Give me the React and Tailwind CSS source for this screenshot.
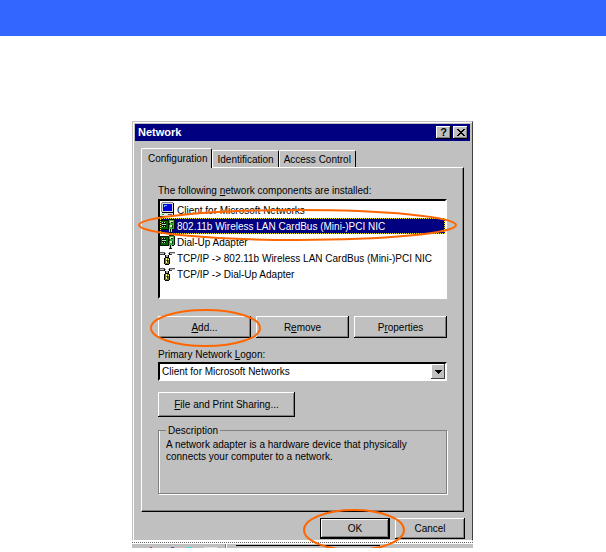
import React, { useState } from "react";

const raised =
  "bg-[#c0c0c0] shadow-[inset_-1px_-1px_#000,inset_1px_1px_#fff,inset_-2px_-2px_#808080]";

const components = [
  { id: 1, icon: "client", name: "Client for Microsoft Networks" },
  { id: 2, icon: "card", name: "802.11b Wireless LAN CardBus (Mini-)PCI NIC" },
  { id: 3, icon: "card", name: "Dial-Up Adapter" },
  { id: 4, icon: "protocol", name: "TCP/IP -> 802.11b Wireless LAN CardBus (Mini-)PCI NIC" },
  { id: 5, icon: "protocol", name: "TCP/IP -> Dial-Up Adapter" },
];

function ClientIcon() {
  return (
    <svg width="16" height="16" viewBox="0 0 16 16" shapeRendering="crispEdges">
      <path d="M2 1h11v9H2z" fill="#d8d8d8" />
      <path d="M2 0h11v1H2zM1 1h1v9H1z" fill="#808080" />
      <path d="M13 1h1v9h-1zM2 10h12v1H2z" fill="#000" />
      <path d="M3 2h9v7H3z" fill="#0000e0" />
      <path d="M4 3h3v1H5v1H4z" fill="#60c0ff" />
      <path d="M1 11h12v3H0v-2h1z" fill="#e0e0e0" />
      <path d="M13 11h1v3h-1zM0 14h13v1H0z" fill="#000" />
      <path d="M8 12h4v1H8z" fill="#606060" />
      <path d="M2 12h2v1H2z" fill="#00c000" />
    </svg>
  );
}

function CardIcon() {
  return (
    <svg width="16" height="16" viewBox="0 0 16 16" shapeRendering="crispEdges">
      <path d="M0 2h9v10H0z" fill="#001800" />
      <path d="M1 3h7v8H1z" fill="#006400" />
      <path d="M2 4h4v2H2zM2 7h4v2H2z" fill="#000" />
      <path d="M2 4h1v1H2zM4 4h1v1H4zM2 8h1v1H2zM4 8h1v1H4zM2 6h4v1H2z" fill="#c0d8c0" />
      <path d="M9 1h5v1h1v9h-1v1h-2v3H9z" fill="#001800" />
      <path d="M9 2h5v9H9z" fill="#40a840" />
      <path d="M10 3h3v2h-3zM10 7h2v2h-2z" fill="#d0f0b0" />
      <path d="M11 4h2v1h-2zM12 7h1v3h-1zM9 5h1v2H9z" fill="#004000" />
      <path d="M9 11h1v3H9zM11 11h1v3h-1z" fill="#e0e000" />
    </svg>
  );
}

function ProtocolIcon() {
  return (
    <svg width="16" height="16" viewBox="0 0 16 16" shapeRendering="crispEdges">
      <path d="M0 2h5v1H0zM9 2h6v1H9z" fill="#606060" />
      <path d="M0 3h4v1H0zM10 3h5v1h-5z" fill="#c0c0c0" />
      <path d="M0 4h4v1H0zM10 4h2v1h-2z" fill="#404040" />
      <path d="M4 3h1v2h1v2H5V5H4zM9 3h1v2H9v2H8V5h1z" fill="#000" />
      <path d="M5 3h1v1H5zM8 3h1v1H8zM6 5h2v2H6z" fill="#a0a0a0" />
      <path d="M5 7h4v1h1v6H9v1H5v-1H4V8h1z" fill="#000" />
      <path d="M5 8h4v6H5z" fill="#707030" />
      <path d="M6 8h1v2H6zM6 11h1v2H6zM8 9h1v1H8z" fill="#ffff80" />
      <path d="M7 10h1v2H7z" fill="#202000" />
    </svg>
  );
}

const icons = { client: ClientIcon, card: CardIcon, protocol: ProtocolIcon };

function Button({ className = "", children, ...props }) {
  return (
    <button type="button" className={`${raised} text-center leading-[13px] ${className}`} {...props}>
      {children}
    </button>
  );
}

// marks the thing the reader has to click
function Ring({ className }) {
  return (
    <span aria-hidden="true" className={`pointer-events-none absolute z-20 ${className}`}>
      <svg className="block h-full w-full overflow-visible">
        <ellipse cx="50%" cy="50%" rx="50%" ry="50%" fill="none" stroke="#ff6600" strokeWidth="2" />
      </svg>
    </span>
  );
}

export default function App() {
  const [tab, setTab] = useState("Configuration");
  const [selected, setSelected] = useState(2);
  const [logon, setLogon] = useState("Client for Microsoft Networks");

  return (
    <div className="bg-white font-['Liberation_Sans',Arial,sans-serif] text-[10px] leading-[13px] text-black">
      <header className="h-9 bg-[#3366ff]" />

      <main className="mx-auto mt-[85px] w-full max-w-[342px] pr-px">
        <section
          aria-label="Network"
          className="border border-l-[#c0c0c0] border-t-[#c0c0c0] border-r-[#404040] border-b-white bg-[#c0c0c0] pb-px shadow-[inset_1px_1px_#fff]"
        >
          <div className="mx-0.5 pt-0.5">
            <div className="flex h-[17px] items-center bg-[#000080] pl-[3px] pr-0.5">
              <h1 className="flex-1 text-[11px] font-bold text-white">Network</h1>
              <button
                type="button"
                aria-label="Help"
                className={`${raised} h-[13px] w-[15px] text-[11px] font-bold leading-[13px]`}
              >
                ?
              </button>
              <button type="button" aria-label="Close" className={`${raised} ml-0.5 flex h-[13px] w-[15px] items-center justify-center`}>
                <svg width="8" height="7" viewBox="0 0 8 7" shapeRendering="crispEdges">
                  <path d="M0 0h2v1h1v1h2V1h1V0h2v1H7v1H6v1H5v1h1v1h1v1h1v1H6V6H5V5H3v1H2v1H0V6h1V5h1V4h1V3H2V2H1V1H0z" />
                </svg>
              </button>
            </div>
          </div>

          <div className="mt-[7px] px-2">
            <div role="tablist" className="flex items-end">
              {["Configuration", "Identification", "Access Control"].map((name) => (
                <button
                  key={name}
                  type="button"
                  role="tab"
                  aria-selected={tab === name}
                  onClick={() => setTab(name)}
                  className={`rounded-t-[2px] border-l border-t border-r border-l-white border-t-white border-r-black bg-[#c0c0c0] ${
                    tab === name ? "relative z-10 -mb-px h-5 pl-1.5 pr-1" : "h-[17px] px-1"
                  }`}
                >
                  {name}
                </button>
              ))}
            </div>

            <div className="border border-l-white border-t-white border-r-black border-b-black px-4 pb-[17px] pt-4 shadow-[inset_-1px_-1px_#808080]">
              <p id="list-label">
                The following <u>n</u>etwork components are installed:
              </p>
              <div className="relative mt-0.5">
                <ul
                  role="listbox"
                  aria-labelledby="list-label"
                  className="h-[100px] border-2 border-l-black border-t-black border-r-white border-b-white bg-white pt-px"
                >
                  {components.map((c) => {
                    const Icon = icons[c.icon];
                    const active = selected === c.id;
                    return (
                      <li
                        key={c.id}
                        role="option"
                        aria-selected={active}
                        onClick={() => setSelected(c.id)}
                        className={`flex h-4 items-center whitespace-nowrap ${
                          active ? "bg-[#000080] text-white outline-1 -outline-offset-1 outline-dotted outline-[#ffff00]" : ""
                        }`}
                      >
                        <span className="mr-px w-4 shrink-0">
                          <Icon />
                        </span>
                        {c.name}
                      </li>
                    );
                  })}
                </ul>
                <Ring className="-left-[19px] -right-[9px] top-[11px] h-[30px]" />
              </div>

              <div className="mt-[17px] grid grid-cols-3 gap-[5px]">
                <div className="relative">
                  <Button className="h-[22px] w-full">
                    <u>A</u>dd...
                  </Button>
                  <Ring className="-left-[7px] -right-[9px] -top-1.5 h-9" />
                </div>
                <Button className="h-[22px]">
                  R<u>e</u>move
                </Button>
                <Button className="h-[22px]">
                  P<u>r</u>operties
                </Button>
              </div>

              <label htmlFor="logon" className="mt-[10px] block">
                Primary Network <u>L</u>ogon:
              </label>
              <div className="relative mt-px">
                <select
                  id="logon"
                  value={logon}
                  onChange={(e) => setLogon(e.target.value)}
                  className="block h-[19px] w-full appearance-none border-2 border-l-black border-t-black border-r-white border-b-white bg-white pl-0.5 leading-[13px] outline-none"
                >
                  <option>Client for Microsoft Networks</option>
                  <option>Windows Logon</option>
                </select>
                <span className="pointer-events-none absolute bottom-0.5 right-0.5 top-0.5 flex w-[14px] items-center justify-center bg-[#c0c0c0] shadow-[inset_-1px_-1px_#404040,inset_1px_1px_#fff]">
                  <svg width="7" height="4" viewBox="0 0 7 4" shapeRendering="crispEdges">
                    <path d="M0 0h7v1H6v1H5v1H4v1H3V3H2V2H1V1H0z" />
                  </svg>
                </span>
              </div>

              <Button className="mt-[11px] block h-[25px] w-[137px]">
                <u>F</u>ile and Print Sharing...
              </Button>

              <fieldset className="mt-[7px] h-[70px] border border-[#808080] px-[7px] shadow-[1px_1px_#fff,inset_1px_0_#fff]">
                <legend className="px-0.5">Description</legend>
                <p className="mt-0.5 max-w-[250px] leading-[12px]">
                  A network adapter is a hardware device that physically connects your computer to a network.
                </p>
              </fieldset>
            </div>
          </div>

          <div className="mt-1.5 flex justify-end gap-[5px] pr-[7px]">
            <div className="relative">
              <Button className="h-[21px] w-[70px] border border-black">OK</Button>
              <Ring className="-left-4 -right-[14px] -top-2 h-10" />
            </div>
            <Button className="h-[21px] w-[70px]">Cancel</Button>
          </div>
        </section>

        {/* top edge of the window behind the dialog */}
        <div className="mt-px border-t border-dotted border-[#606060]" />
        <div className="mt-px flex h-1 items-end bg-[#c0c0c0]">
          <span className="ml-[18px] h-px w-0.5 bg-[#b05050]" />
          <span className="ml-[19px] h-px w-[3px] bg-[#6050e0]" />
          <span className="ml-[14px] h-px w-1 bg-[#40e0e0]" />
          <span className="ml-3 h-px w-[14px] bg-[#e0e0e0]" />
          <span className="h-px w-px bg-[#a0a060]" />
          <span className="ml-1.5 h-1 w-0.5 border-l border-[#808080] bg-white" />
          <span className="ml-[9px] h-[3px] w-[144px] border-t border-black" />
        </div>
      </main>
    </div>
  );
}
